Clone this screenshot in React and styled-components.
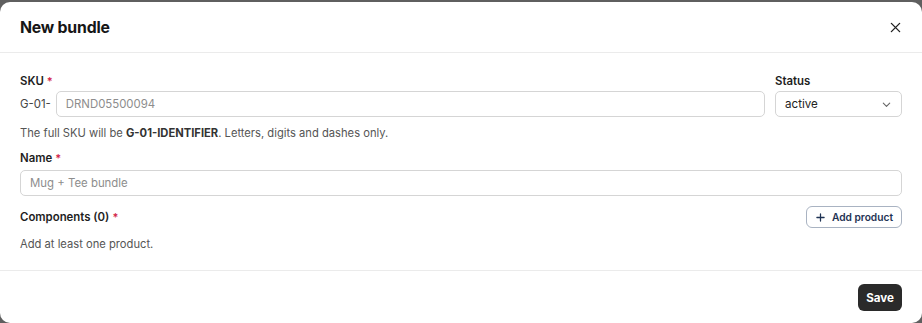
import React, { useState } from 'react'
import styled, { createGlobalStyle } from 'styled-components'

const GlobalStyle = createGlobalStyle`
  html, body {
    margin: 0;
    padding: 0;
    background: #5f5f5f;
    font-family: Inter, "Noto Sans", "Liberation Sans", sans-serif;
    overflow: hidden;
  }
  * { box-sizing: border-box; }
`

const Modal = styled.div`
  margin: 2px 0 0 0;
  height: 321px;
  background: #ffffff;
  border-radius: 10px;
  display: flex;
  flex-direction: column;
  color: #1a1a1a;
`

const Header = styled.div`
  height: 51px;
  display: flex;
  align-items: center;
  justify-content: space-between;
  padding: 0 20px;
  border-bottom: 1px solid #ebebeb;
`

const Title = styled.h2`
  margin: 0;
  font-size: 15.8px;
  font-weight: 700;
  letter-spacing: -0.2px;
  color: #161616;
`

const CloseBtn = styled.button`
  border: none;
  background: none;
  padding: 0;
  width: 14px;
  height: 14px;
  display: flex;
  align-items: center;
  justify-content: center;
  cursor: pointer;
  color: #222;
`

const Body = styled.div`
  flex: 0 0 auto;
  height: 218px;
  padding: 21px 20px 0 20px;
  border-bottom: 1px solid #ebebeb;
  display: flex;
  flex-direction: column;
`

const Row = styled.div`
  display: flex;
  gap: 10px;
  align-items: flex-end;
`

const Field = styled.div`
  display: flex;
  flex-direction: column;
  flex: ${p => (p.$grow ? 1 : '0 0 auto')};
  width: ${p => p.$width || 'auto'};
`

const Label = styled.label`
  font-size: 11.4px;
  font-weight: 600;
  color: #1e1e1e;
  margin-bottom: ${p => p.$mb || '3px'};
  display: flex;
  align-items: center;
  gap: 3px;
`

const Req = styled.span`
  color: #d3264a;
  font-size: 11px;
`

const InputRow = styled.div`
  display: flex;
  align-items: center;
  gap: 5px;
`

const Prefix = styled.span`
  font-size: 11.4px;
  color: #444;
`

const Input = styled.input`
  flex: 1;
  width: 100%;
  height: 26px;
  border: 1px solid #d5d5d5;
  border-radius: 5px;
  padding: 0 9px;
  font-family: inherit;
  font-size: 11.4px;
  color: #222;
  outline: none;
  &::placeholder { color: #8d8d8d; }
`

const Select = styled.div`
  height: 26px;
  border: 1px solid #d5d5d5;
  border-radius: 5px;
  padding: 0 9px;
  display: flex;
  align-items: center;
  justify-content: space-between;
  font-size: 11.6px;
  color: #222;
`

const Help = styled.p`
  margin: 9px 0 0 0;
  font-size: 11.2px;
  color: #555;
  b { color: #333; font-weight: 700; }
`

const Muted = styled.p`
  margin: 9px 0 0 0;
  font-size: 11.2px;
  color: #555;
`

const Section = styled.div`
  margin-top: ${p => p.$mt || '0'};
`

const SpaceRow = styled.div`
  display: flex;
  align-items: center;
  justify-content: space-between;
`

const OutlineBtn = styled.button`
  height: 22px;
  padding: 0 8px 0 9px;
  border: 1px solid #a9b3c2;
  border-radius: 6px;
  background: #fff;
  color: #1f3354;
  font-family: inherit;
  font-size: 10.2px;
  font-weight: 600;
  display: flex;
  align-items: center;
  gap: 7px;
  cursor: pointer;
`

const Footer = styled.div`
  flex: 1;
  display: flex;
  justify-content: flex-end;
  align-items: flex-start;
  padding: 13px 20px 0 20px;
`

const PrimaryBtn = styled.button`
  height: 27px;
  padding: 0 8px;
  border: none;
  border-radius: 6px;
  background: #2a2a2a;
  color: #fff;
  font-family: inherit;
  font-size: 11.6px;
  font-weight: 700;
  cursor: pointer;
`

function App() {
  const [sku, setSku] = useState('')
  const [name, setName] = useState('')

  return (
    <>
      <GlobalStyle />
      <Modal>
        <Header>
          <Title>New bundle</Title>
          <CloseBtn aria-label="Close">
            <svg width="11" height="11" viewBox="0 0 12 12" fill="none" stroke="currentColor" strokeWidth="1.5" strokeLinecap="round">
              <path d="M1.5 1.5l9 9M10.5 1.5l-9 9" />
            </svg>
          </CloseBtn>
        </Header>

        <Body>
          <Row>
            <Field $grow>
              <Label>SKU<Req>*</Req></Label>
              <InputRow>
                <Prefix>G-01-</Prefix>
                <Input placeholder="DRND05500094" value={sku} onChange={e => setSku(e.target.value)} />
              </InputRow>
            </Field>
            <Field $width="127px">
              <Label>Status</Label>
              <Select>
                active
                <svg width="11" height="11" viewBox="0 0 12 12" fill="none" stroke="#666" strokeWidth="1.2" strokeLinecap="round" strokeLinejoin="round">
                  <path d="M2.5 4.5L6 8l3.5-3.5" />
                </svg>
              </Select>
            </Field>
          </Row>
          <Help>The full SKU will be <b>G-01-IDENTIFIER</b>. Letters, digits and dashes only.</Help>

          <Section $mt="11px">
            <Label $mb="5px">Name<Req>*</Req></Label>
            <Input placeholder="Mug + Tee bundle" value={name} onChange={e => setName(e.target.value)} />
          </Section>

          <Section $mt="10px">
            <SpaceRow>
              <Label $mb="0">Components (0)<Req>*</Req></Label>
              <OutlineBtn>
                <svg width="9" height="9" viewBox="0 0 10 10" fill="none" stroke="currentColor" strokeWidth="1.4" strokeLinecap="round">
                  <path d="M5 1v8M1 5h8" />
                </svg>
                Add product
              </OutlineBtn>
            </SpaceRow>
            <Muted>Add at least one product.</Muted>
          </Section>
        </Body>

        <Footer>
          <PrimaryBtn>Save</PrimaryBtn>
        </Footer>
      </Modal>
    </>
  )
}

export default App
